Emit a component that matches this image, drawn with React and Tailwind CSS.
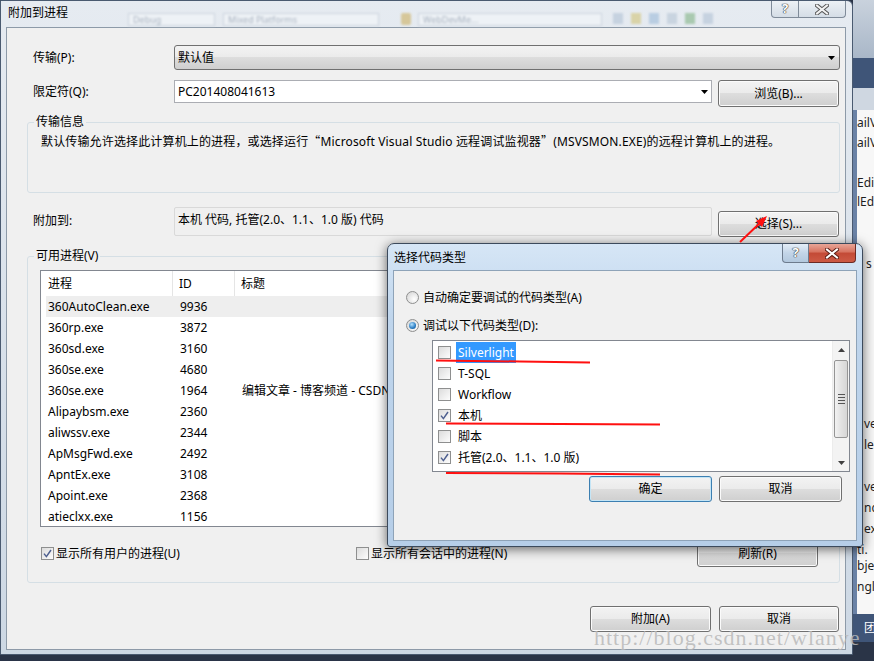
const btnBg = 'bg-[linear-gradient(#f3f3f3_0%,#ebebeb_48%,#dddddd_50%,#cfcfcf_100%)]';

const Btn = ({ children, className = '', focused = false }) => (
  <div
    className={`flex items-center justify-center rounded-[3px] border ${
      focused ? 'border-[#3c7fb1] shadow-[inset_0_0_0_1px_#c4e5f6]' : 'border-[#707070] shadow-[inset_0_0_0_1px_#fbfbfb]'
    } ${btnBg} leading-[16px] ${className}`}
  >
    {children}
  </div>
);

const Arrow = () => (
  <svg width="7" height="4" viewBox="0 0 7 4" className="shrink-0">
    <polygon points="0,0 7,0 3.5,4" fill="#000" />
  </svg>
);

const Check = ({ checked }) => (
  <span className="w-[13px] h-[13px] shrink-0 border border-[#8e8f8f] bg-[linear-gradient(135deg,#dcdcdc,#fdfdfd)] flex items-center justify-center">
    {checked && (
      <svg width="9" height="9" viewBox="0 0 9 9">
        <path d="M1 4.6 L3.4 7.6 L8 1" stroke="#4d5f8f" strokeWidth="1.5" fill="none" />
      </svg>
    )}
  </span>
);

const Radio = ({ selected }) => (
  <span className="w-[13px] h-[13px] shrink-0 rounded-full border border-[#8e8f8f] bg-[radial-gradient(circle_at_65%_65%,#ffffff,#d0d0d0)] flex items-center justify-center">
    {selected && (
      <span className="w-[7px] h-[7px] rounded-full bg-[radial-gradient(circle_at_40%_35%,#b4e2ff,#2a7cc2_60%,#0d4a82)]" />
    )}
  </span>
);

const XGlyph = ({ fill = '#fff', stroke = '#3a3a3a' }) => (
  <svg width="14" height="11" viewBox="0 0 14 11">
    <path d="M2 1.5 L12 9.5 M12 1.5 L2 9.5" stroke={stroke} strokeWidth="4" strokeLinecap="square" />
    <path d="M2 1.5 L12 9.5 M12 1.5 L2 9.5" stroke={fill} strokeWidth="2" strokeLinecap="square" />
  </svg>
);

const processes = [
  ['360AutoClean.exe', '9936', ''],
  ['360rp.exe', '3872', ''],
  ['360sd.exe', '3160', ''],
  ['360se.exe', '4680', ''],
  ['360se.exe', '1964', '编辑文章 - 博客频道 - CSDN.NET - 360安全浏览器'],
  ['Alipaybsm.exe', '2360', ''],
  ['aliwssv.exe', '2344', ''],
  ['ApMsgFwd.exe', '2492', ''],
  ['ApntEx.exe', '3108', ''],
  ['Apoint.exe', '2368', ''],
  ['atieclxx.exe', '1156', ''],
];

const codeTypes = [
  ['Silverlight', false, true],
  ['T-SQL', false, false],
  ['Workflow', false, false],
  ['本机', true, false],
  ['脚本', false, false],
  ['托管(2.0、1.1、1.0 版)', true, false],
];

const VsStrip = () => (
  <div className="w-[21px] h-full flex flex-col overflow-hidden text-[12px] text-[#1e1e1e] whitespace-nowrap">
    <div className="h-[58px] bg-[linear-gradient(#c9d2dd,#a9b7c8)]" />
    <div className="h-[30px] bg-[#3f5578]" />
    <div className="h-[22px] bg-[#cfd7e1]" />
    <div className="h-[504px] bg-[#f7f7f7] border-l-[4px] border-[#6a82a6] leading-[16px]">
      <div className="mt-[5px] h-[16px]">ailVi</div>
      <div className="mt-[4px] h-[16px]">ailVi</div>
      <div className="mt-[24px] h-[16px]">Edit</div>
      <div className="mt-[3px] h-[16px]">lEdi</div>
      <div className="mt-[46px] h-[16px] pl-[9px]">s</div>
      <div className="mt-[144px] h-[16px] pl-[7px]">ve</div>
      <div className="mt-[5px] h-[16px] pl-[7px]">le</div>
      <div className="mt-[26px] h-[16px] pl-[7px]">ve</div>
      <div className="mt-[5px] h-[16px] pl-[7px]">nc</div>
      <div className="mt-[5px] h-[16px] pl-[7px]">ex</div>
      <div className="mt-[5px] h-[16px]">ti.</div>
      <div className="h-[16px]">bjec</div>
      <div className="mt-[5px] h-[16px]">ngle</div>
    </div>
    <div className="h-[28px] bg-[#3f5578] text-white flex items-center pl-[11px]">团队</div>
    <div className="flex-1 bg-[#2a3447]" />
  </div>
);

const MainWindow = () => (
  <div className="absolute left-0 top-0 w-[853px] h-[655px] flex flex-col border border-[#4a5a70] rounded-tr-[6px] bg-[linear-gradient(180deg,#e6ebf1,#d6dfe9_60%,#cdd8e4)]">
    {/* title bar */}
    <div className="h-[26px] flex items-start">
      <span className="ml-[7px] mt-[4px] leading-[16px] text-black">附加到进程</span>
      <div className="ml-[60px] mt-[12px] w-[87px] h-[13px] border border-[#ccd4de] bg-[#eef2f6] text-[9px] leading-[11px] pl-[4px] text-[#a9b3c0] blur-[0.8px]">Debug</div>
      <div className="ml-[8px] mt-[12px] w-[156px] h-[13px] border border-[#ccd4de] bg-[#eef2f6] text-[9px] leading-[11px] pl-[4px] text-[#a9b3c0] blur-[0.8px]">Mixed Platforms</div>
      <div className="ml-[22px] mt-[12px] w-[10px] h-[12px] rounded-[2px] bg-[#d6c79a] blur-[1px]" />
      <div className="ml-[7px] mt-[12px] w-[184px] h-[13px] border border-[#ccd4de] bg-[#eef2f6] text-[9px] leading-[11px] pl-[4px] text-[#a9b3c0] blur-[0.8px]">WebDevMe...</div>
      <div className="ml-[11px] mt-[12px] flex gap-[8px] blur-[1px]">
        <span className="w-[10px] h-[11px] bg-[#c6d2e0]" />
        <span className="w-[10px] h-[11px] bg-[#d9d3a8]" />
        <span className="w-[10px] h-[11px] bg-[#b9cde2]" />
        <span className="w-[10px] h-[11px] bg-[#c9d4e0]" />
        <span className="w-[10px] h-[11px] bg-[#a9c9b0]" />
        <span className="w-[10px] h-[11px] bg-[#c6d2e0]" />
      </div>
      <div className="ml-auto mr-[6px] flex">
        <div className="w-[28px] h-[17px] border border-t-0 border-[#7f8b99] rounded-bl-[4px] bg-[linear-gradient(#edf1f5,#d5dde6)] flex items-center justify-center text-[13px] font-bold text-white [text-shadow:0_0_1px_#333,0_0_1px_#333,0_0_1px_#333]">?</div>
        <div className="w-[47px] h-[17px] border border-t-0 border-l-0 border-[#7f8b99] rounded-br-[4px] bg-[linear-gradient(#edf1f5,#d5dde6)] flex items-center justify-center">
          <XGlyph fill="#f2f2f2" stroke="#555" />
        </div>
      </div>
    </div>

    {/* client */}
    <div className="ml-[5px] w-[840px] h-[623px] border border-[#8d9aa8] bg-[#f0f0f0] flex flex-col">
      <div className="mt-[17px] h-[25px] flex items-center">
        <span className="ml-[26px] w-[141px] leading-[16px]">传输(P):</span>
        <div className={`w-[666px] h-[25px] rounded-[3px] border border-[#707070] ${btnBg} flex items-center pl-[3px] pr-[4px]`}>
          <span className="flex-1 leading-[16px]">默认值</span>
          <Arrow />
        </div>
      </div>

      <div className="mt-[10px] h-[27px] flex items-start">
        <span className="ml-[26px] w-[141px] h-[23px] flex items-center">限定符(Q):</span>
        <div className="w-[538px] h-[23px] border border-[#abadb3] bg-white flex items-center pl-[3px] pr-[3px]">
          <span className="flex-1 leading-[16px]">PC201408041613</span>
          <Arrow />
        </div>
        <Btn className="ml-[6px] w-[121px] h-[27px]">浏览(B)...</Btn>
      </div>

      <fieldset className="mt-[7px] ml-[20px] w-[813px] h-[79px] border border-[#d5dfe5] rounded-[3px]">
        <legend className="ml-[6px] px-[2px] leading-[16px]">传输信息</legend>
        <div className="mt-[3px] ml-[13px] leading-[16px] whitespace-nowrap tracking-[0.15px]">
          默认传输允许选择此计算机上的进程，或选择运行<span className="font-['Noto_Sans_CJK_SC',sans-serif]">“</span>Microsoft Visual Studio 远程调试监视器<span className="font-['Noto_Sans_CJK_SC',sans-serif]">”</span>(MSVSMON.EXE)的远程计算机上的进程。
        </div>
      </fieldset>

      <div className="mt-[14px] h-[30px] flex items-start">
        <span className="ml-[26px] w-[141px] h-[27px] flex items-center">附加到:</span>
        <div className="w-[538px] h-[29px] border border-[#d9d9d9] rounded-[2px] bg-[#f0f0f0] flex items-center pl-[3px]">
          <span className="leading-[16px] -mt-[3px]">本机 代码, 托管(2.0、1.1、1.0 版) 代码</span>
        </div>
        <Btn className="ml-[6px] mt-[4px] w-[121px] h-[26px]">选择(S)...</Btn>
      </div>

      <fieldset className="mt-[11px] ml-[20px] w-[813px] h-[335px] border border-[#d5dfe5] rounded-[3px]">
        <legend className="ml-[6px] px-[2px] leading-[16px]">可用进程(V)</legend>
        <div className="mt-[6px] ml-[12px] w-[788px] h-[257px] border border-[#828790] bg-white overflow-hidden">
          <div className="h-[25px] flex">
            <div className="w-[132px] border-r border-[#e5e5e5] pl-[7px] flex items-center">进程</div>
            <div className="w-[62px] border-r border-[#e5e5e5] pl-[6px] flex items-center">ID</div>
            <div className="flex-1 pl-[6px] flex items-center">标题</div>
          </div>
          {processes.map(([name, id, title], i) => (
            <div
              key={i}
              className={`ml-[5px] h-[21px] flex items-center whitespace-nowrap ${i === 0 ? 'bg-[#eeeeee]' : ''}`}
            >
              <span className="w-[127px] pl-[2px]">{name}</span>
              <span className="w-[62px] pl-[7px]">{id}</span>
              <span className="pl-[7px]">{title}</span>
            </div>
          ))}
        </div>
        <div className="mt-[13px] h-[27px] flex items-center">
          <div className="ml-[13px] w-[315px] flex items-center">
            <Check checked />
            <span className="ml-[2px] leading-[16px]">显示所有用户的进程(U)</span>
          </div>
          <div className="w-[341px] flex items-center">
            <Check />
            <span className="ml-[2px] leading-[16px]">显示所有会话中的进程(N)</span>
          </div>
          <Btn className="w-[121px] h-[27px]">刷新(R)</Btn>
        </div>
      </fieldset>

      <div className="mt-[23px] flex">
        <Btn className="ml-[583px] w-[121px] h-[26px]">附加(A)</Btn>
        <Btn className="ml-[8px] w-[120px] h-[26px]">取消</Btn>
      </div>
    </div>
  </div>
);

const CodeTypeDialog = () => (
  <div className="absolute left-[387px] top-[243px] w-[476px] h-[304px] flex flex-col rounded-t-[7px] rounded-b-[3px] border border-[#3c4a5c] bg-[linear-gradient(180deg,#d6e6f6_0%,#bfd5ec_25%,#b6cee8_100%)] shadow-[0_2px_12px_rgba(0,0,0,0.6)]">
    <div className="h-[26px] flex items-start">
      <span className="ml-[6px] mt-[6px] leading-[16px]">选择代码类型</span>
      <div className="ml-auto mr-[6px] flex">
        <div className="w-[27px] h-[19px] border border-t-0 border-[#6d7b8d] rounded-bl-[4px] bg-[linear-gradient(#e4edf7,#c3d5e8_50%,#b3c8de)] flex items-center justify-center text-[13px] font-bold text-white [text-shadow:0_0_1px_#333,0_0_1px_#333,0_0_1px_#333]">?</div>
        <div className="w-[47px] h-[19px] border border-t-0 border-l-0 border-[#6b2a24] rounded-br-[4px] bg-[linear-gradient(#e8a597_0%,#d7725f_45%,#c34a36_50%,#cd5a45_100%)] flex items-center justify-center">
          <XGlyph fill="#ffffff" stroke="#5a1d14" />
        </div>
      </div>
    </div>
    <div className="ml-[5px] w-[464px] h-[271px] border border-[#8ea3b8] bg-[#f0f0f0] flex flex-col">
      <div className="mt-[20px] ml-[12px] h-[13px] flex items-center">
        <Radio />
        <span className="ml-[4px] leading-[16px]">自动确定要调试的代码类型(A)</span>
      </div>
      <div className="mt-[15px] ml-[12px] h-[13px] flex items-center">
        <Radio selected />
        <span className="ml-[4px] leading-[16px]">调试以下代码类型(D):</span>
      </div>
      <div className="mt-[8px] ml-[38px] w-[418px] h-[132px] border border-[#828790] bg-white flex">
        <div className="flex-1 pt-[1px]">
          {codeTypes.map(([label, checked, hl]) => (
            <div key={label} className="h-[21px] flex items-center pl-[5px]">
              <Check checked={checked} />
              <span className={`ml-[5px] px-[2px] leading-[21px] ${hl ? 'bg-[#3399ff] text-white' : ''}`}>{label}</span>
            </div>
          ))}
        </div>
        <div className="w-[17px] flex flex-col bg-[#f3f3f3] border-l border-[#ececec]">
          <div className="h-[17px] flex items-center justify-center">
            <svg width="7" height="4" viewBox="0 0 7 4"><polygon points="0,4 7,4 3.5,0" fill="#404040" /></svg>
          </div>
          <div className="mt-[2px] mx-[1px] h-[78px] rounded-[2px] border border-[#959595] bg-[linear-gradient(90deg,#f2f2f2,#e2e2e2_50%,#d6d6d6)] flex flex-col items-center justify-center gap-[2px]">
            <span className="w-[7px] h-px bg-[#555]" />
            <span className="w-[7px] h-px bg-[#555]" />
            <span className="w-[7px] h-px bg-[#555]" />
            <span className="w-[7px] h-px bg-[#555]" />
          </div>
          <div className="flex-1" />
          <div className="h-[17px] flex items-center justify-center">
            <svg width="7" height="4" viewBox="0 0 7 4"><polygon points="0,0 7,0 3.5,4" fill="#404040" /></svg>
          </div>
        </div>
      </div>
      <div className="mt-[4px] flex">
        <Btn focused className="ml-[195px] w-[123px] h-[26px]">确定</Btn>
        <Btn className="ml-[7px] w-[123px] h-[26px]">取消</Btn>
      </div>
    </div>
  </div>
);

const Annotations = () => (
  <svg className="absolute left-0 top-0 pointer-events-none" width="874" height="661" viewBox="0 0 874 661">
    <path d="M436 360.5 L520 361.5 L590 362.5" stroke="#ff1010" strokeWidth="2" fill="none" />
    <path d="M446 423.5 L560 424 L660 424.5" stroke="#ff1010" strokeWidth="2" fill="none" />
    <path d="M446 473 L560 473.5 L660 474.5" stroke="#ff1010" strokeWidth="2" fill="none" />
    <path d="M740 242 L762 221" stroke="#ff1010" strokeWidth="2" fill="none" />
    <polygon points="767,216 756,221 762,227" fill="#ff1010" />
  </svg>
);

export default function App() {
  return (
    <div className="relative w-[874px] h-[661px] overflow-hidden bg-[#2a3447] font-['Noto_Sans','Noto_Sans_CJK_SC',sans-serif] text-[12px] text-black">
      <div className="flex h-full">
        <div className="w-[853px]" />
        <VsStrip />
      </div>
      <MainWindow />
      <CodeTypeDialog />
      <Annotations />
      <div className="absolute left-[594px] top-[625px] font-['Liberation_Serif',serif] text-[22px] leading-[26px] tracking-[1px] text-[rgba(185,185,185,0.85)] pointer-events-none whitespace-nowrap">
        http://blog.csdn.net/wlanye
      </div>
    </div>
  );
}
